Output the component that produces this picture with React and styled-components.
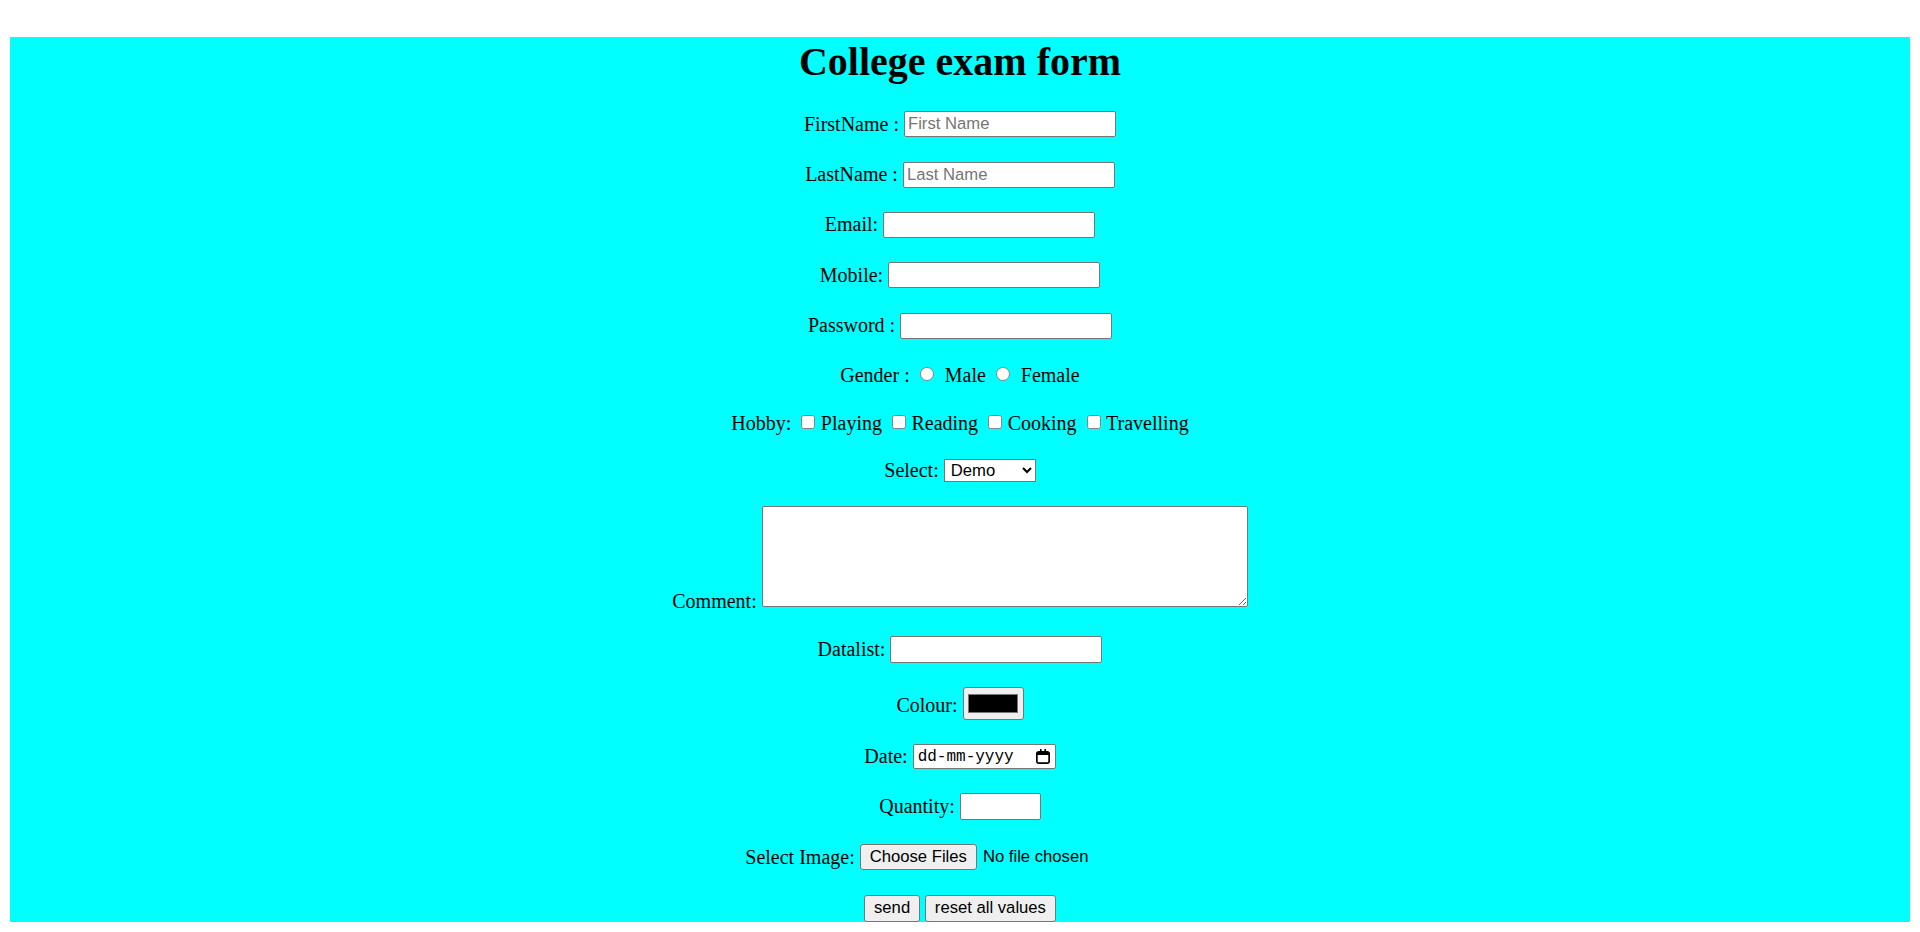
import React from 'react';
import styled, { createGlobalStyle } from 'styled-components';

const controlFont = `
  font-family: "Liberation Sans", Arial, sans-serif;
  font-size: 16.67px;
  color: #000;
`;

const GlobalStyle = createGlobalStyle`
  html, body {
    margin: 0;
    padding: 0;
    background: #fff;
  }
  body {
    font-family: "Liberation Serif", "Times New Roman", serif;
    font-size: 20px;
    color: #000;
  }
`;

export default function App() {
  return (
    <>
      <GlobalStyle />
      <Page>
        <Title>College exam form</Title>
        <Form onSubmit={(e) => e.preventDefault()}>
          <Row $h={50.4}>
            <Label>FirstName :</Label>
            <TextInput type="text" placeholder="First Name" />
          </Row>
          <Row $h={50.4}>
            <Label>LastName :</Label>
            <TextInput type="text" placeholder="Last Name" />
          </Row>
          <Row $h={50.4}>
            <Label>Email:</Label>
            <TextInput type="email" />
          </Row>
          <Row $h={50.4}>
            <Label>Mobile:</Label>
            <TextInput type="tel" />
          </Row>
          <Row $h={50.4}>
            <Label>Password :</Label>
            <TextInput type="password" />
          </Row>
          <Row $h={50} $gap={10.5}>
            <Label>Gender :</Label>
            <Option $gap={10.5}>
              <Radio name="gender" />
              Male
            </Option>
            <Option $gap={10.5}>
              <Radio name="gender" />
              Female
            </Option>
          </Row>
          <Row $h={46} $gap={10}>
            <Label>Hobby:</Label>
            {['Playing', 'Reading', 'Cooking', 'Travelling'].map((h) => (
              <Option key={h} $gap={5.5}>
                <Checkbox />
                {h}
              </Option>
            ))}
          </Row>
          <Row $h={48}>
            <Label>Select:</Label>
            <Select defaultValue="demo">
              <option value="demo">Demo</option>
              <option value="one">One</option>
              <option value="two">Two</option>
            </Select>
          </Row>
          <Row $align="flex-end" $pad="11px 0 17px">
            <CommentLabel>Comment:</CommentLabel>
            <TextArea />
          </Row>
          <Row $h={51.4}>
            <Label>Datalist:</Label>
            <TextInput type="text" list="items" $h={27} />
            <datalist id="items">
              <option value="One" />
              <option value="Two" />
            </datalist>
          </Row>
          <Row $h={57}>
            <Label $shift={2.4}>Colour:</Label>
            <ColourButton type="button">
              <Swatch />
            </ColourButton>
          </Row>
          <Row $h={49}>
            <Label>Date:</Label>
            <DateBox>
              <DateText>dd-mm-yyyy</DateText>
              <CalendarIcon />
            </DateBox>
          </Row>
          <Row $h={51}>
            <Label>Quantity:</Label>
            <TextInput type="number" $w={81} $h={27} />
          </Row>
          <Row $h={50}>
            <Label>Select Image:</Label>
            <FileField>
              <Button type="button" $h={26} $px={9}>
                Choose Files
              </Button>
              <FileText>No file chosen</FileText>
            </FileField>
          </Row>
          <Row $h={39.3} $align="flex-end" $gap={5.5}>
            <Button type="submit">send</Button>
            <Button type="reset">reset all values</Button>
          </Row>
        </Form>
      </Page>
    </>
  );
}

function CalendarIcon() {
  return (
    <svg width="14" height="15" viewBox="0 0 14 15" aria-hidden="true">
      <path
        d="M4 0h1.6v2h2.8V0H10v2h1.2C12.7 2 14 3.2 14 4.6v7.8c0 1.4-1.3 2.6-2.8 2.6H2.8C1.3 15 0 13.8 0 12.4V4.6C0 3.2 1.3 2 2.8 2H4V0zm-2.3 6v6.2c0 .6.5 1.1 1.1 1.1h8.4c.6 0 1.1-.5 1.1-1.1V6H1.7z"
        fill="#000"
      />
    </svg>
  );
}

const Page = styled.div`
  background: #00ffff;
  margin: 37px 10px 0;
`;

const Title = styled.h1`
  margin: 0 0 13px;
  font-size: 40px;
  line-height: 49px;
  font-weight: bold;
  text-align: center;
`;

const Form = styled.form`
  display: flex;
  flex-direction: column;
`;

const Row = styled.div`
  display: flex;
  justify-content: center;
  align-items: ${(p) => p.$align || 'center'};
  gap: ${(p) => (p.$gap ?? 5)}px;
  height: ${(p) => (p.$h ? `${p.$h}px` : 'auto')};
  padding: ${(p) => p.$pad || '0'};
`;

const Label = styled.label`
  line-height: 23px;
  white-space: nowrap;
  margin-top: ${(p) => p.$shift || 0}px;
`;

const CommentLabel = styled(Label)`
  margin-bottom: -6px;
`;

const Option = styled.label`
  display: inline-flex;
  align-items: center;
  gap: ${(p) => p.$gap}px;
  line-height: 23px;
  white-space: nowrap;
`;

const Radio = styled.input.attrs({ type: 'radio' })`
  appearance: none;
  box-sizing: border-box;
  flex: none;
  width: 14px;
  height: 14px;
  margin: 0 0 3px;
  background: #fff;
  border: 1px solid #858585;
  border-radius: 50%;

  &:checked {
    border-color: #0075ff;
    background: radial-gradient(circle, #0075ff 0 3.5px, #fff 4px);
  }
`;

const Checkbox = styled.input.attrs({ type: 'checkbox' })`
  appearance: none;
  box-sizing: border-box;
  flex: none;
  width: 14px;
  height: 14px;
  margin: 0 0 3px;
  background: #fff;
  border: 1px solid #858585;
  border-radius: 2.5px;

  &:checked {
    border-color: #0075ff;
    background: #0075ff;
  }
`;

const TextInput = styled.input`
  box-sizing: border-box;
  width: ${(p) => p.$w || 212}px;
  height: ${(p) => p.$h || 26}px;
  margin: 0;
  padding: 1px 3px;
  border: 1px solid #767676;
  border-radius: 2px;
  background: #fff;
  ${controlFont}

  &::placeholder {
    color: #757575;
  }
`;

const Select = styled.select`
  box-sizing: border-box;
  width: 92px;
  height: 23px;
  margin: 0;
  padding: 0 0 0 2px;
  border: 1px solid #767676;
  border-radius: 0;
  background: #fff;
  ${controlFont}
`;

const TextArea = styled.textarea`
  box-sizing: border-box;
  width: 486px;
  height: 101px;
  margin: 0;
  padding: 2px;
  border: 1px solid #767676;
  border-radius: 2px;
  background: #fff;
  ${controlFont}
`;

const ColourButton = styled.button`
  box-sizing: border-box;
  display: flex;
  align-items: center;
  justify-content: center;
  width: 61px;
  height: 33px;
  padding: 0;
  background: #efefef;
  border: 1px solid #767676;
  border-radius: 3px;
`;

const Swatch = styled.span`
  box-sizing: border-box;
  display: block;
  width: 50px;
  height: 19px;
  background: #000;
  border: 1px solid #777;
`;

const DateBox = styled.div`
  box-sizing: border-box;
  display: flex;
  align-items: center;
  justify-content: space-between;
  width: 143px;
  height: 25px;
  padding: 0 5px 0 4px;
  background: #fff;
  border: 1px solid #767676;
  border-radius: 2px;
`;

const DateText = styled.span`
  font-family: "Liberation Mono", "Courier New", monospace;
  font-size: 16px;
  color: #000;
`;

const FileField = styled.div`
  display: flex;
  align-items: center;
  gap: 6px;
  width: 315px;
`;

const FileText = styled.span`
  ${controlFont}
  white-space: nowrap;
`;

const Button = styled.button`
  box-sizing: border-box;
  height: ${(p) => p.$h || 27}px;
  margin: 0;
  padding: 0 ${(p) => p.$px || 8.6}px;
  background: #efefef;
  border: 1px solid #767676;
  border-radius: 3px;
  white-space: nowrap;
  ${controlFont}
`;
